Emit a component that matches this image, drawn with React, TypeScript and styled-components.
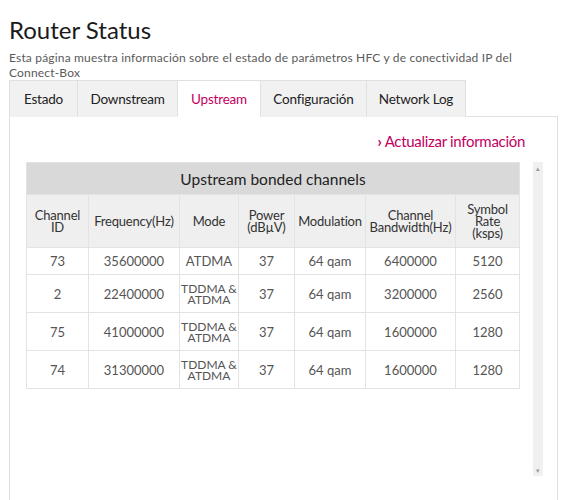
import React from "react";
import styled, { createGlobalStyle } from "styled-components";

const GlobalStyle = createGlobalStyle`
  body {
    margin: 0;
    background: #fff;
    font-family: Lato, "Open Sans", sans-serif;
    color: #333;
  }
`;

const tabs = [
  { label: "Estado", width: 69 },
  { label: "Downstream", width: 101 },
  { label: "Upstream", width: 84 },
  { label: "Configuración", width: 107 },
  { label: "Network Log", width: 100 },
];

const columns = [
  { label: "Channel\nID", width: 62 },
  { label: "Frequency(Hz)", width: 91 },
  { label: "Mode", width: 59 },
  { label: "Power\n(dBµV)", width: 56 },
  { label: "Modulation", width: 71 },
  { label: "Channel\nBandwidth(Hz)", width: 90 },
  { label: "Symbol\nRate\n(ksps)", width: 64 },
];

const rows = [
  ["73", "35600000", "ATDMA", "37", "64 qam", "6400000", "5120"],
  ["2", "22400000", "TDDMA &\nATDMA", "37", "64 qam", "3200000", "2560"],
  ["75", "41000000", "TDDMA &\nATDMA", "37", "64 qam", "1600000", "1280"],
  ["74", "31300000", "TDDMA &\nATDMA", "37", "64 qam", "1600000", "1280"],
];

const App: React.FC = () => {
  return (
    <Page>
      <GlobalStyle />
      <Title>Router Status</Title>
      <Intro>
        Esta página muestra información sobre el estado de parámetros HFC y de conectividad IP del
        <br />
        Connect-Box
      </Intro>
      <TabBar>
        {tabs.map((t) => (
          <Tab key={t.label} $width={t.width} $active={t.label === "Upstream"}>
            {t.label}
          </Tab>
        ))}
      </TabBar>
      <Panel>
        <RefreshRow>
          <RefreshLink href="#">
            <Chevron>›</Chevron> Actualizar información
          </RefreshLink>
        </RefreshRow>
        <ScrollArea>
          <Table>
            <colgroup>
              {columns.map((c) => (
                <col key={c.label} style={{ width: c.width }} />
              ))}
            </colgroup>
            <thead>
              <tr>
                <Caption colSpan={7}>Upstream bonded channels</Caption>
              </tr>
              <HeadRow>
                {columns.map((c) => (
                  <HeadCell key={c.label}>{c.label}</HeadCell>
                ))}
              </HeadRow>
            </thead>
            <tbody>
              {rows.map((r, i) => (
                <DataRow key={i} $tall={i > 0}>
                  {r.map((v, j) => (
                    <DataCell key={j} $stacked={v.includes("\n")}>
                      {v}
                    </DataCell>
                  ))}
                </DataRow>
              ))}
            </tbody>
          </Table>
          <ScrollTrack>
            <ScrollArrow>▴</ScrollArrow>
            <ScrollArrow>▾</ScrollArrow>
          </ScrollTrack>
        </ScrollArea>
      </Panel>
    </Page>
  );
};

const Page = styled.div`
  padding: 15px 14px 0 9px;
`;

const Title = styled.h1`
  margin: 0;
  font-size: 24px;
  line-height: 30px;
  font-weight: 400;
  color: #1a1a1a;
`;

const Intro = styled.p`
  margin: 6px 0 0;
  font-size: 12px;
  letter-spacing: 0.18px;
  line-height: 14.5px;
  color: #5a5a5a;
`;

const TabBar = styled.div`
  display: flex;
  margin-top: 0;
  position: relative;
  z-index: 1;
`;

const Tab = styled.div<{ $active?: boolean; $width: number }>`
  box-sizing: border-box;
  width: ${(p) => p.$width}px;
  height: 37px;
  display: flex;
  align-items: center;
  justify-content: center;
  font-size: 13.5px;
  letter-spacing: -0.2px;
  border: 1px solid #e0e0e0;
  border-bottom: ${(p) => (p.$active ? "1px solid #fff" : "none")};
  margin-left: -1px;
  background: ${(p) => (p.$active ? "#fff" : "#f1f1f1")};
  color: ${(p) => (p.$active ? "#c2005f" : "#222")};

  &:first-child {
    margin-left: 0;
  }
`;

const Panel = styled.div`
  border: 1px solid #e0e0e0;
  margin-top: -1px;
  width: 549px;
  height: 400px;
  padding: 0 0 0 16px;
  box-sizing: border-box;
`;

const RefreshRow = styled.div`
  display: flex;
  justify-content: flex-end;
  padding: 13px 32px 0 0;
  height: 32px;
`;

const RefreshLink = styled.a`
  color: #c2005f;
  text-decoration: none;
  font-size: 15px;
  letter-spacing: -0.3px;
  line-height: 22px;
`;

const Chevron = styled.span`
  font-weight: 700;
`;

const ScrollArea = styled.div`
  display: flex;
  gap: 13px;
  height: 314px;
`;

const Table = styled.table`
  width: 493px;
  height: 226px;
  table-layout: fixed;
  border-collapse: collapse;
  border: 1px solid #e3e3e3;
  text-align: center;
  font-size: 13px;
`;

const Caption = styled.th`
  height: 31px;
  background: #d9d9d9;
  font-weight: 400;
  font-size: 15.5px;
  color: #222;
  padding: 0;
`;

const HeadRow = styled.tr`
  height: 53px;
  background: #efefef;
`;

const HeadCell = styled.th`
  border: 1px solid #e3e3e3;
  font-weight: 400;
  white-space: pre;
  line-height: 12px;
  color: #333;
  padding: 0;
  letter-spacing: -0.2px;
`;

const DataRow = styled.tr<{ $tall?: boolean }>`
  height: ${(p) => (p.$tall ? "38px" : "27px")};
`;

const DataCell = styled.td<{ $stacked?: boolean }>`
  border: 1px solid #e3e3e3;
  white-space: pre;
  line-height: ${(p) => (p.$stacked ? "11px" : "16px")};
  font-size: ${(p) => (p.$stacked ? "12px" : "13px")};
  color: #555;
  padding: 0;
`;

const ScrollTrack = styled.div`
  width: 10px;
  background: #f0f0f0;
  display: flex;
  flex-direction: column;
  justify-content: space-between;
  align-items: center;
  padding: 2px 0;
`;

const ScrollArrow = styled.span`
  font-size: 7px;
  line-height: 8px;
  color: #999;
`;

export default App;
